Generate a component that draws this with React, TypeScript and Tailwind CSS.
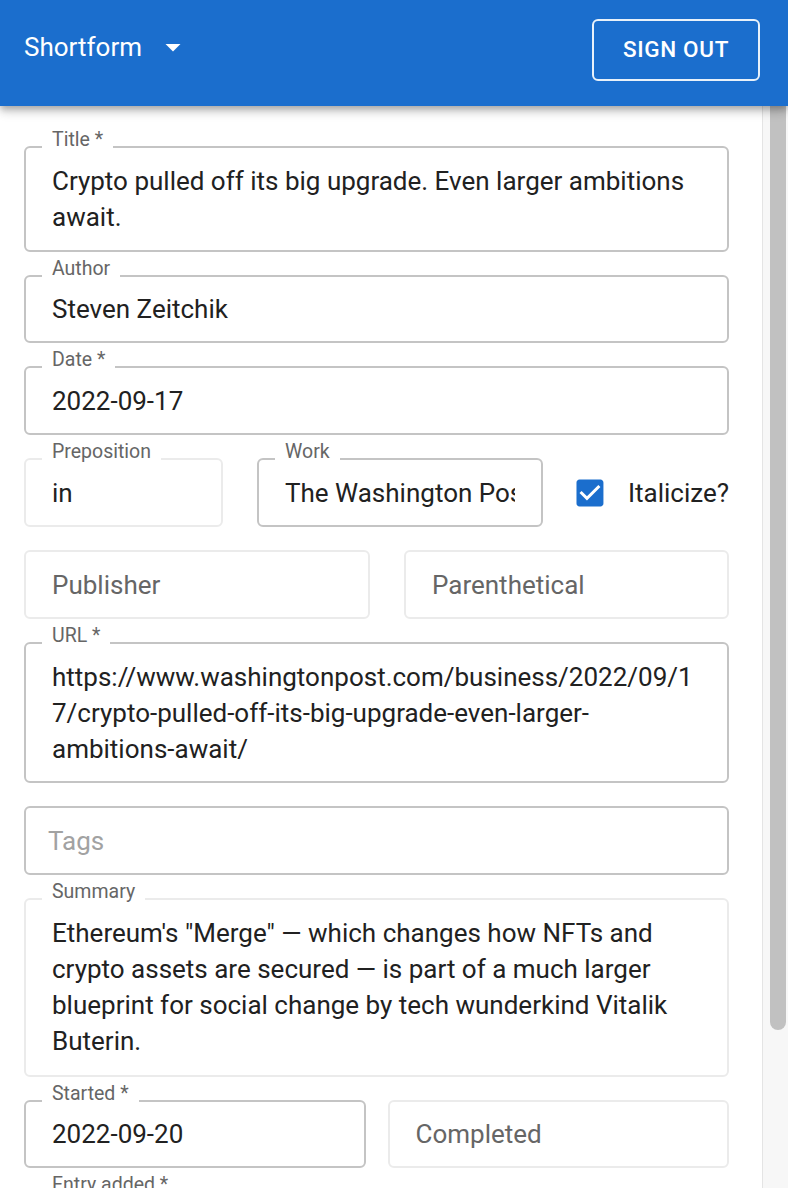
import React from "react";

type FieldProps = {
  label?: string;
  light?: boolean;
  className?: string;
  children?: React.ReactNode;
  multi?: boolean;
};

function Field({ label, light, className = "", children, multi }: FieldProps) {
  return (
    <div
      className={`relative shrink-0 rounded-[6px] border-2 ${
        light ? "border-[#ebebeb]" : "border-[#c4c4c4]"
      } ${multi ? "py-[15px]" : "flex items-center"} px-[26px] ${className}`}
    >
      {label && (
        <span className="absolute left-[16px] top-[-21px] whitespace-nowrap bg-white px-[10px] text-[19.5px] leading-[26px] text-[#666666]">
          {label}
        </span>
      )}
      {children}
    </div>
  );
}

function Lines({ lines }: { lines: string[] }) {
  return (
    <div className="text-[26px] leading-[36px] text-[#212121]">
      {lines.map((l, i) => (
        <div key={i} className="whitespace-nowrap">
          {l}
        </div>
      ))}
    </div>
  );
}

function Value({ children }: { children: React.ReactNode }) {
  return (
    <div className="min-w-0 flex-1 overflow-hidden whitespace-nowrap text-[26px] leading-[36px] text-[#212121]">
      {children}
    </div>
  );
}

export default function App() {
  return (
    <div className="flex h-[1188px] w-[788px] flex-col overflow-hidden bg-white font-['Roboto',sans-serif]">
      <header className="relative z-10 flex h-[106px] shrink-0 items-start justify-between bg-[#1b6ecd] pl-[24px] pr-[28px] pt-[19px] shadow-[0_3px_6px_-1px_rgba(0,0,0,0.2),0_6px_8px_0_rgba(0,0,0,0.14),0_2px_15px_0_rgba(0,0,0,0.12)]">
        <div className="flex h-[56px] items-center">
          <span className="text-[26px] leading-[32px] text-white">Shortform</span>
          <svg viewBox="0 0 24 24" className="ml-[13px] h-[36px] w-[36px] fill-white">
            <path d="M7 10l5 5 5-5z" />
          </svg>
        </div>
        <button className="flex h-[62px] w-[168px] items-center justify-center rounded-[6px] border-2 border-white/90 text-[22.5px] font-medium tracking-[0.65px] text-white">
          SIGN OUT
        </button>
      </header>
      <div className="flex min-h-0 flex-1">
        <main className="flex min-w-0 flex-1 flex-col gap-[23px] pl-[24px] pr-[33px] pt-[40px]">
          <Field label="Title *" multi className="h-[106px]">
            <Lines lines={["Crypto pulled off its big upgrade. Even larger ambitions", "await."]} />
          </Field>
          <Field label="Author" className="h-[68px]">
            <Value>Steven Zeitchik</Value>
          </Field>
          <Field label="Date *" className="h-[69px]">
            <Value>2022-09-17</Value>
          </Field>
          <div className="flex h-[69px] shrink-0 items-center">
            <Field label="Preposition" light className="h-[69px] w-[199px]">
              <Value>in</Value>
            </Field>
            <Field label="Work" className="ml-[34px] h-[69px] w-[286px]">
              <Value>The Washington Post</Value>
            </Field>
            <svg viewBox="0 0 24 24" className="ml-[29px] h-[36px] w-[36px] fill-[#1b6ecd]">
              <path d="M19 3H5c-1.11 0-2 .9-2 2v14c0 1.1.89 2 2 2h14c1.11 0 2-.9 2-2V5c0-1.1-.89-2-2-2zm-9 14l-5-5 1.41-1.41L10 14.17l7.59-7.59L19 8l-9 9z" />
            </svg>
            <span className="ml-[20px] whitespace-nowrap text-[26px] leading-[36px] text-[#212121]">Italicize?</span>
          </div>
          <div className="flex h-[69px] shrink-0">
            <Field light className="h-[69px] w-[346px]">
              <span className="text-[26px] leading-[36px] text-[#666666]">Publisher</span>
            </Field>
            <Field light className="ml-[34px] h-[69px] flex-1">
              <span className="text-[26px] leading-[36px] text-[#666666]">Parenthetical</span>
            </Field>
          </div>
          <Field label="URL *" multi className="h-[141px]">
            <Lines
              lines={[
                "https://www.washingtonpost.com/business/2022/09/1",
                "7/crypto-pulled-off-its-big-upgrade-even-larger-",
                "ambitions-await/",
              ]}
            />
          </Field>
          <Field className="h-[69px] !px-[22px]">
            <span className="text-[26px] leading-[36px] text-[#a2a2a2]">Tags</span>
          </Field>
          <Field label="Summary" light multi className="h-[179px]">
            <Lines
              lines={[
                "Ethereum's \"Merge\" \u2014 which changes how NFTs and",
                "crypto assets are secured \u2014 is part of a much larger",
                "blueprint for social change by tech wunderkind Vitalik",
                "Buterin.",
              ]}
            />
          </Field>
          <div className="flex h-[68px] shrink-0 gap-[22px]">
            <Field label="Started *" className="h-[68px] flex-1">
              <Value>2022-09-20</Value>
            </Field>
            <Field light className="h-[68px] flex-1">
              <span className="text-[26px] leading-[36px] text-[#666666]">Completed</span>
            </Field>
          </div>
          <Field label="Entry added *" className="h-[69px]">
            <Value>2022-09-20</Value>
          </Field>
        </main>
        <aside className="w-[26px] shrink-0 border-l border-[#e4e4e4] bg-[#f7f7f7] pl-[7px]">
          <div className="h-[924px] w-[16px] rounded-b-[8px] bg-[#c1c1c1]" />
        </aside>
      </div>
    </div>
  );
}
